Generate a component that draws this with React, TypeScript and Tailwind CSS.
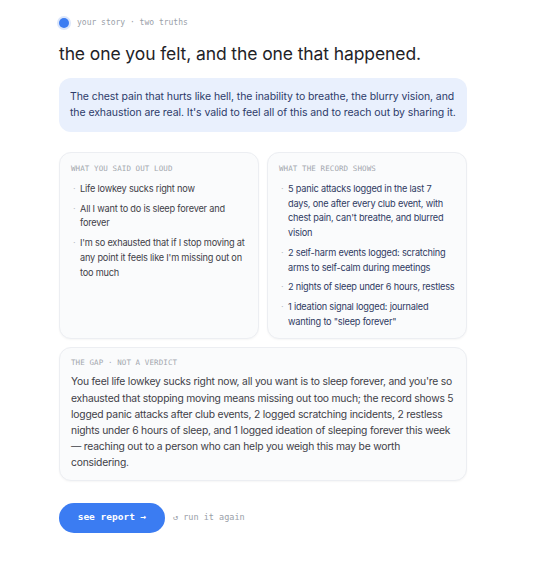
const said = [
  'Life lowkey sucks right now',
  'All I want to do is sleep forever and forever',
  "I'm so exhausted that if I stop moving at any point it feels like I'm missing out on too much",
];

const record = [
  "5 panic attacks logged in the last 7 days, one after every club event, with chest pain, can't breathe, and blurred vision",
  '2 self-harm events logged: scratching arms to self-calm during meetings',
  '2 nights of sleep under 6 hours, restless',
  '1 ideation signal logged: journaled wanting to "sleep forever"',
];

const sans = "font-['Inter',sans-serif]";
const mono = "font-['DejaVu_Sans_Mono',monospace]";

function Card({ label, items, tone }: { label: string; items: string[]; tone: string }) {
  return (
    <div className="rounded-xl border border-[#eceef2] bg-[#fafbfc] px-[11px] pt-[11px] pb-[9px] shadow-[0_1px_2px_rgba(0,0,0,0.04)]">
      <div className={`${mono} text-[7.5px] leading-[10px] tracking-[0.1px] text-[#a3a7ae] uppercase`}>{label}</div>
      <ul className="mt-[8px] flex flex-col gap-[5px]">
        {items.map((t) => (
          <li key={t} className={`flex text-[9.2px] leading-[14.7px] tracking-[-0.2px] ${tone}`}>
            <span className="w-[9px] shrink-0 pl-[2px] text-[#b8bcc4]">·</span>
            <span>{t}</span>
          </li>
        ))}
      </ul>
    </div>
  );
}

export default function App() {
  return (
    <div className={`min-h-[573px] bg-white pl-[59px] pt-[17px] ${sans}`}>
      <div className="w-[408px]">
        <div className="flex h-[12px] items-center gap-[8px]">
          <span className="h-[10px] w-[10px] rounded-full bg-[#3b7cf2] ring-2 ring-[#dbe6fb]" />
          <span className={`${mono} text-[8px] text-[#9aa0a8]`}>your story · two truths</span>
        </div>

        <h1 className="mt-[13px] text-[17.5px] leading-[24px] tracking-[-0.1px] text-[#1f2328]">
          the one you felt, and the one that happened.
        </h1>

        <div className="mt-[12px] rounded-xl bg-[#e9f0fd] px-[11px] py-[11px] text-[10.5px] leading-[16px] tracking-[-0.08px] text-[#2d3b6a]">
          The chest pain that hurts like hell, the inability to breathe, the blurry vision, and the exhaustion are real. It's valid to feel all of this and to reach out by sharing it.
        </div>

        <div className="mt-[20px] grid grid-cols-2 gap-[8px]">
          <Card label="What you said out loud" items={said} tone="text-[#3f4148]" />
          <Card label="What the record shows" items={record} tone="text-[#2f3a62]" />
        </div>

        <div className="mt-[8px] rounded-xl border border-[#eceef2] bg-[#fafbfc] px-[11px] pt-[10px] pb-[9px] shadow-[0_1px_2px_rgba(0,0,0,0.04)]">
          <div className={`${mono} text-[7.5px] leading-[10px] tracking-[0.1px] text-[#a3a7ae] uppercase`}>the gap · not a verdict</div>
          <p className="mt-[5px] text-[10.3px] leading-[16.2px] tracking-[-0.2px] text-[#3f4148]">
            You feel life lowkey sucks right now, all you want is to sleep forever, and you're so exhausted that stopping moving means missing out too much; the record shows 5 logged panic attacks after club events, 2 logged scratching incidents, 2 restless nights under 6 hours of sleep, and 1 logged ideation of sleeping forever this week — reaching out to a person who can help you weigh this may be worth considering.
          </p>
        </div>

        <div className="mt-[22px] flex items-center gap-[8px]">
          <button className={`${mono} h-[30px] w-[106px] rounded-full bg-[#3b7cf2] text-[9.5px] font-bold text-white`}>
            see report →
          </button>
          <span className={`${mono} text-[8.5px] text-[#9aa0a8]`}>↺ run it again</span>
        </div>
      </div>
    </div>
  );
}
